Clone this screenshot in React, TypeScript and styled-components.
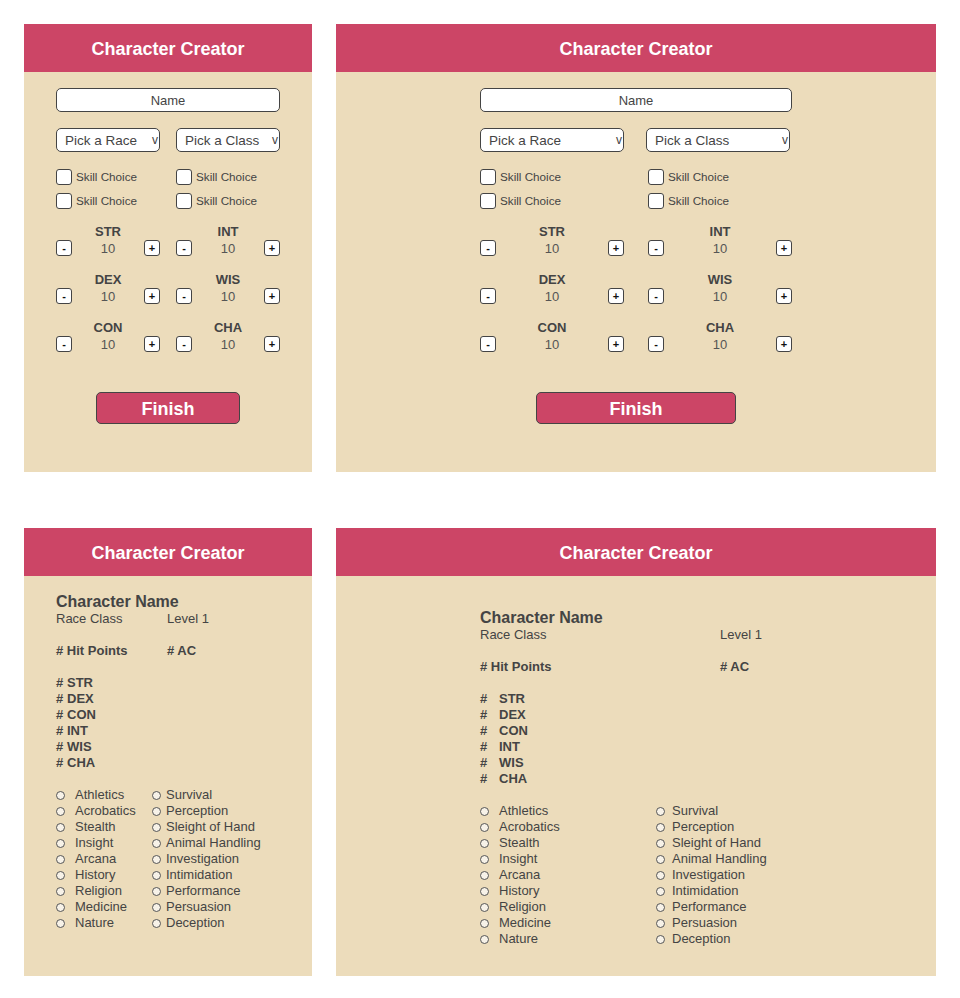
import React from "react";
import styled, { createGlobalStyle } from "styled-components";

const Global = createGlobalStyle`
  html, body { margin: 0; padding: 0; background: #ffffff; }
  body { font-family: "Liberation Sans", Arial, sans-serif; color: #444444; }
  * { box-sizing: border-box; }
`;

const Page = styled.div`
  display: grid;
  grid-template-columns: 288px 600px;
  column-gap: 24px;
  row-gap: 56px;
  padding: 24px;
`;

const Panel = styled.section`
  height: 448px;
  background: #ecdcbb;
  display: flex;
  flex-direction: column;
`;

const Header = styled.header`
  height: 48px;
  flex: none;
  background: #cc4566;
  color: #ffffff;
  font-weight: bold;
  font-size: 18px;
  padding-top: 2px;
  display: flex;
  align-items: center;
  justify-content: center;
`;

const Form = styled.div<{ $w: number }>`
  width: ${(p) => p.$w}px;
  margin: 16px auto 0;
  display: flex;
  flex-direction: column;
`;

const NameInput = styled.div`
  height: 24px;
  background: #ffffff;
  border: 1px solid #444;
  border-radius: 5px;
  font-size: 13px;
  display: flex;
  align-items: center;
  justify-content: center;
`;

const TwoCol = styled.div<{ $col: number; $gap: number; $mt: number; $rowGap?: number }>`
  display: grid;
  grid-template-columns: ${(p) => p.$col}px ${(p) => p.$col}px;
  column-gap: ${(p) => p.$gap}px;
  row-gap: ${(p) => p.$rowGap ?? 0}px;
  margin-top: ${(p) => p.$mt}px;
`;

const Select = styled.div`
  height: 24px;
  background: #ffffff;
  border: 1px solid #444;
  border-radius: 5px;
  font-size: 13.5px;
  padding-left: 8px;
  padding-right: 1px;
  display: flex;
  align-items: center;
  justify-content: space-between;
`;

const Caret = styled.span`
  font-size: 12px;
`;

const CheckRow = styled.label`
  display: flex;
  align-items: center;
  gap: 4px;
  font-size: 11.7px;
  height: 16px;
  padding-top: 1px;
`;

const Box = styled.span`
  width: 16px;
  height: 16px;
  flex: none;
  background: #ffffff;
  border: 1px solid #444;
  border-radius: 3px;
`;

const Stat = styled.div`
  display: flex;
  flex-direction: column;
`;

const StatLabel = styled.div`
  font-weight: bold;
  font-size: 13px;
  line-height: 16px;
  text-align: center;
`;

const StatControls = styled.div`
  display: flex;
  align-items: center;
  justify-content: space-between;
  height: 16px;
`;

const StepBtn = styled.span`
  width: 16px;
  height: 16px;
  background: #ffffff;
  border: 1px solid #444;
  border-radius: 3px;
  font-size: 11px;
  font-weight: bold;
  color: #111;
  display: flex;
  align-items: center;
  justify-content: center;
  line-height: 1;
`;

const StatValue = styled.span`
  font-size: 13px;
  color: #555;
`;

const FinishButton = styled.div<{ $w: number }>`
  width: ${(p) => p.$w}px;
  height: 32px;
  margin: 40px auto 0;
  padding-top: 2px;
  background: #cc4566;
  border: 1px solid #444;
  border-radius: 5px;
  color: #ffffff;
  font-weight: bold;
  font-size: 18px;
  display: flex;
  align-items: center;
  justify-content: center;
`;

/* Summary sheet */
const Sheet = styled.div<{ $pt: number; $ml: number }>`
  padding-top: ${(p) => p.$pt}px;
  margin-left: ${(p) => p.$ml}px;
  font-size: 13px;
  line-height: 16px;
  display: flex;
  flex-direction: column;
`;

const CharName = styled.div`
  font-weight: bold;
  font-size: 16px;
  line-height: 18px;
`;

const InfoRow = styled.div<{ $col: number; $bold?: boolean; $mt?: number }>`
  display: grid;
  grid-template-columns: ${(p) => p.$col}px auto;
  font-weight: ${(p) => (p.$bold ? "bold" : "normal")};
  margin-top: ${(p) => p.$mt ?? 0}px;
`;

const AbilityList = styled.div`
  margin-top: 16px;
  display: flex;
  flex-direction: column;
  font-weight: bold;
`;

const AbilityLine = styled.div<{ $hash: number }>`
  display: grid;
  grid-template-columns: ${(p) => p.$hash}px auto;
`;

const SkillGrid = styled.div<{ $col: number }>`
  margin-top: 16px;
  display: grid;
  grid-template-columns: ${(p) => p.$col}px auto;
`;

const SkillColumn = styled.div`
  display: flex;
  flex-direction: column;
`;

const SkillItem = styled.div<{ $gap: number }>`
  display: flex;
  align-items: center;
  gap: ${(p) => p.$gap}px;
  height: 16px;
`;

const Radio = styled.span`
  width: 9px;
  height: 9px;
  flex: none;
  border-radius: 50%;
  border: 1px solid #555;
  background: #f7f2e8;
  margin-top: 1px;
`;

const STATS_L = ["STR", "DEX", "CON"];
const STATS_R = ["INT", "WIS", "CHA"];
const SKILLS_A = ["Athletics", "Acrobatics", "Stealth", "Insight", "Arcana", "History", "Religion", "Medicine", "Nature"];
const SKILLS_B = ["Survival", "Perception", "Sleight of Hand", "Animal Handling", "Investigation", "Intimidation", "Performance", "Persuasion", "Deception"];
const ABILITIES = ["STR", "DEX", "CON", "INT", "WIS", "CHA"];

function StatBox({ name }: { name: string }) {
  return (
    <Stat>
      <StatLabel>{name}</StatLabel>
      <StatControls>
        <StepBtn>-</StepBtn>
        <StatValue>10</StatValue>
        <StepBtn>+</StepBtn>
      </StatControls>
    </Stat>
  );
}

function Creator({ w, col, gap, selGap, finishW }: { w: number; col: number; gap: number; selGap: number; finishW: number }) {
  return (
    <Panel>
      <Header>Character Creator</Header>
      <Form $w={w}>
        <NameInput>Name</NameInput>
        <TwoCol $col={col} $gap={selGap} $mt={16}>
          <Select>
            <span>Pick a Race</span>
            <Caret>v</Caret>
          </Select>
          <Select>
            <span>Pick a Class</span>
            <Caret>v</Caret>
          </Select>
        </TwoCol>
        <TwoCol $col={col} $gap={gap} $mt={16} $rowGap={8}>
          {[0, 1, 2, 3].map((i) => (
            <CheckRow key={i}>
              <Box />
              Skill Choice
            </CheckRow>
          ))}
        </TwoCol>
        <TwoCol $col={col} $gap={gap} $mt={16} $rowGap={16}>
          {STATS_L.map((s, i) => (
            <React.Fragment key={s}>
              <StatBox name={s} />
              <StatBox name={STATS_R[i]} />
            </React.Fragment>
          ))}
        </TwoCol>
      </Form>
      <FinishButton $w={finishW}>Finish</FinishButton>
    </Panel>
  );
}

function Summary({ wide }: { wide: boolean }) {
  const infoCol = wide ? 240 : 111;
  const skillCol = wide ? 176 : 96;
  return (
    <Panel>
      <Header>Character Creator</Header>
      <Sheet $pt={wide ? 33 : 17} $ml={wide ? 144 : 32}>
        <CharName>Character Name</CharName>
        <InfoRow $col={infoCol}>
          <span>Race Class</span>
          <span>Level 1</span>
        </InfoRow>
        <InfoRow $col={infoCol} $bold $mt={16}>
          <span># Hit Points</span>
          <span># AC</span>
        </InfoRow>
        <AbilityList>
          {ABILITIES.map((a) => (
            <AbilityLine key={a} $hash={wide ? 19 : 11}>
              <span>#</span>
              <span>{a}</span>
            </AbilityLine>
          ))}
        </AbilityList>
        <SkillGrid $col={skillCol}>
          <SkillColumn>
            {SKILLS_A.map((s) => (
              <SkillItem key={s} $gap={10}>
                <Radio />
                {s}
              </SkillItem>
            ))}
          </SkillColumn>
          <SkillColumn>
            {SKILLS_B.map((s) => (
              <SkillItem key={s} $gap={wide ? 7 : 5}>
                <Radio />
                {s}
              </SkillItem>
            ))}
          </SkillColumn>
        </SkillGrid>
      </Sheet>
    </Panel>
  );
}

export default function App() {
  return (
    <>
      <Global />
      <Page>
        <Creator w={224} col={104} gap={16} selGap={16} finishW={144} />
        <Creator w={312} col={144} gap={24} selGap={22} finishW={200} />
        <Summary wide={false} />
        <Summary wide={true} />
      </Page>
    </>
  );
}
